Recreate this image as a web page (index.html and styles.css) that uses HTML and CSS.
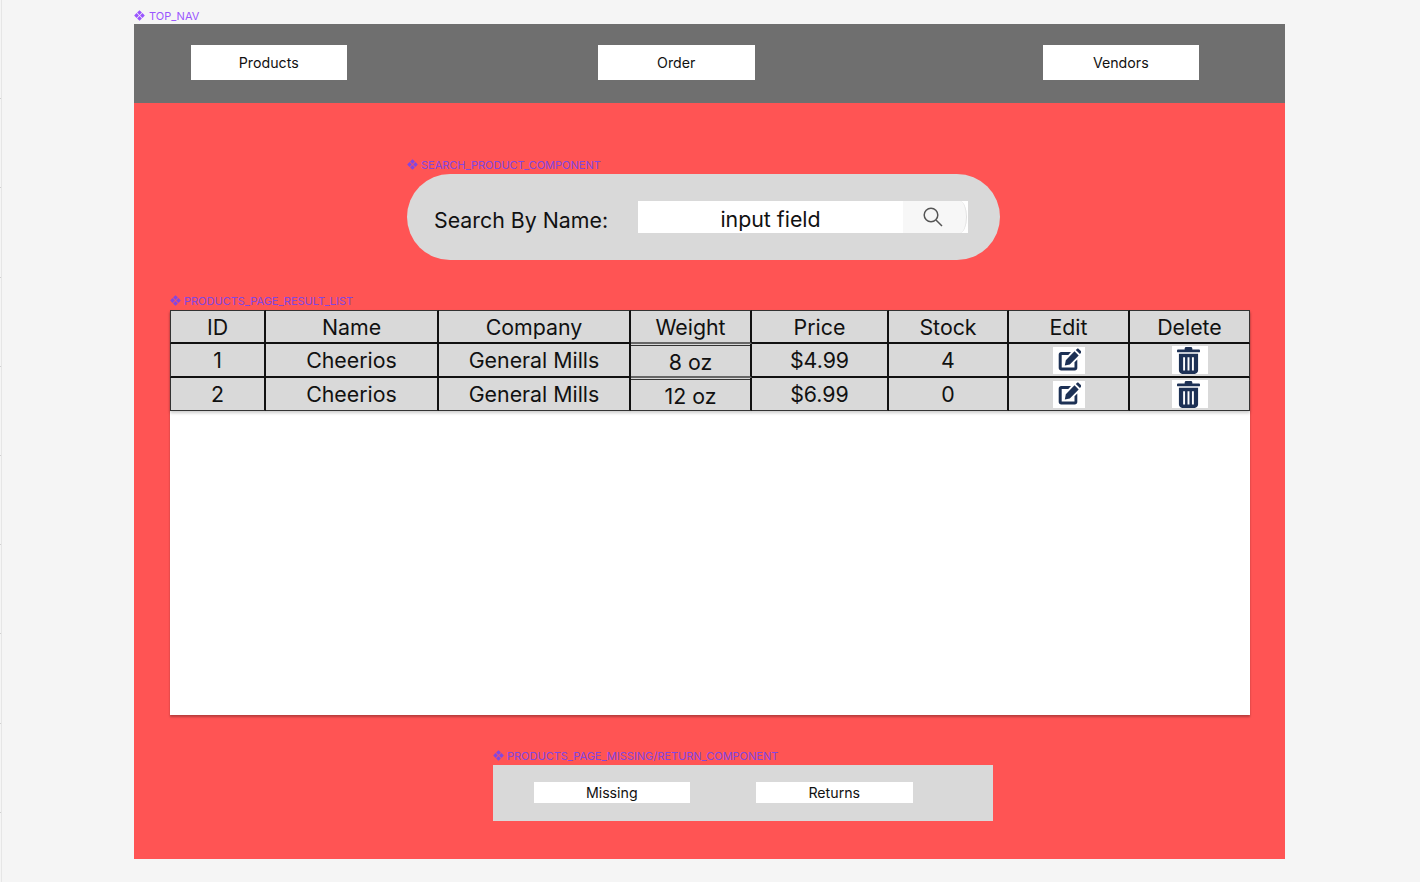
FILE: index.html
```html
<!DOCTYPE html>
<html lang="en">
<head>
  <meta charset="UTF-8">
  <title>Products Page</title>
  <link rel="stylesheet" href="styles.css">
</head>
<body>
  <svg width="0" height="0" class="defs">
    <symbol id="comp" viewBox="0 0 12 12">
      <path d="M6 .2 8.600 2.800 6 5.400 3.400 2.800ZM6 6.600 8.600 9.200 6 11.800 3.400 9.200ZM2.800 3.400 5.400 6 2.800 8.600.2 6ZM9.200 3.400 11.800 6 9.200 8.600 6.600 6Z"/>
    </symbol>
    <symbol id="edit" viewBox="0 0 24 24">
      <path d="M4.200 4H14L11.300 6.900H4.700V19.500H17.500V14.200L20.300 11.400V19.900C20.300 21.300 19.200 22.400 17.800 22.400H4.200C2.800 22.400 1.700 21.300 1.700 19.900V6.500C1.700 5.100 2.800 4 4.200 4Z"/>
      <path d="M17.500 3.300 21.700 7.500 12.800 16.400 7.800 17.600 8.800 12.200ZM18.800 2 19.900 .9C20.400 .4 21.200 .4 21.700 .9L23.900 3.100C24.400 3.600 24.400 4.400 23.900 4.900L22.900 6Z"/>
    </symbol>
    <symbol id="trash" viewBox="0 0 24 28">
      <path d="M8 1.500C8 .7 8.700 0 9.500 0H14.500C15.300 0 16 .7 16 1.500V2.500H23C23.600 2.500 24 2.900 24 3.500V4.500C24 5.100 23.600 5.500 23 5.500H1C.4 5.500 0 5.100 0 4.500V3.500C0 2.900.4 2.500 1 2.500H8Z"/>
      <path fill-rule="evenodd" d="M2 7H22V24.500C22 26.400 20.400 28 18.500 28H5.500C3.600 28 2 26.400 2 24.500ZM6.400 10.500V24.500H8.400V10.500ZM11 10.500V24.500H13V10.500ZM15.600 10.500V24.500H17.600V10.500Z"/>
    </symbol>
  </svg>

  <div class="ruler"></div>

  <div class="frame">
    <div class="tag tag-top">
      <svg class="tag-icon"><use href="#comp"/></svg>TOP_NAV
    </div>

    <nav class="top-nav">
      <a class="nav-btn">Products</a>
      <a class="nav-btn">Order</a>
      <a class="nav-btn">Vendors</a>
    </nav>

    <main class="page">
      <section class="search-wrap">
        <div class="tag tag-dark">
          <svg class="tag-icon"><use href="#comp"/></svg>SEARCH_PRODUCT_COMPONENT
        </div>
        <div class="search">
          <span class="search-label">Search By Name:</span>
          <div class="search-input">
            <span class="input-text">input field</span>
            <span class="search-btn">
              <svg width="22" height="22" viewBox="0 0 22 22" fill="none" stroke="#555" stroke-width="1.500">
                <circle cx="9" cy="9" r="6.800"/>
                <path d="M14 14 20 20"/>
              </svg>
            </span>
          </div>
        </div>
      </section>

      <section class="results">
        <div class="tag tag-dark">
          <svg class="tag-icon"><use href="#comp"/></svg>PRODUCTS_PAGE_RESULT_LIST
        </div>
        <div class="results-panel">
          <table class="results-table">
            <colgroup>
              <col class="col-id"><col class="col-name"><col class="col-company"><col class="col-weight">
              <col class="col-price"><col class="col-stock"><col class="col-edit"><col class="col-delete">
            </colgroup>
            <tr class="row-head">
              <td>ID</td><td>Name</td><td>Company</td><td class="head-weight">Weight</td><td>Price</td><td>Stock</td><td>Edit</td><td>Delete</td>
            </tr>
            <tr class="row-first">
              <td>1</td><td>Cheerios</td><td>General Mills</td><td class="cell-weight">8 oz</td><td>$4.99</td><td>4</td>
              <td><span class="icon-box edit-box"><svg width="24" height="24"><use href="#edit"/></svg></span></td>
              <td><span class="icon-box trash-box"><svg width="23" height="27"><use href="#trash"/></svg></span></td>
            </tr>
            <tr class="row-last">
              <td>2</td><td>Cheerios</td><td>General Mills</td><td class="cell-weight">12 oz</td><td>$6.99</td><td>0</td>
              <td><span class="icon-box edit-box"><svg width="24" height="24"><use href="#edit"/></svg></span></td>
              <td><span class="icon-box trash-box"><svg width="23" height="27"><use href="#trash"/></svg></span></td>
            </tr>
          </table>
        </div>
      </section>

      <section class="missing-wrap">
        <div class="tag tag-dark">
          <svg class="tag-icon"><use href="#comp"/></svg>PRODUCTS_PAGE_MISSING/RETURN_COMPONENT
        </div>
        <div class="missing">
          <a class="small-btn">Missing</a>
          <a class="small-btn">Returns</a>
        </div>
      </section>
    </main>
  </div>
</body>
</html>
```

FILE: styles.css
```css
html, body {
  margin: 0;
  height: 882px;
  overflow: hidden;
}
body {
  font-family: Inter, "Liberation Sans", sans-serif;
  background: #f5f5f5;
  color: #111;
}
.defs {
  position: absolute;
}
.ruler {
  position: absolute;
  left: 0;
  top: 0;
  width: 2px;
  height: 882px;
  background: repeating-linear-gradient(to bottom, transparent 0, transparent 88.2px, #d0d0d0 88.2px, #d0d0d0 89.2px) 0 10px;
  border-right: 1px solid #e6e6e6;
  box-sizing: border-box;
}

.frame {
  width: 1151px;
  margin-left: 134px;
}

/* purple component tags */
.tag {
  display: flex;
  align-items: flex-start;
  height: 15px;
  font-size: 11px;
  line-height: 12px;
  white-space: nowrap;
}
.tag-icon {
  flex: none;
  width: 11px;
  height: 11px;
  margin-right: 3px;
  fill: currentColor;
}
.tag-top {
  color: #9a55ff;
  height: 14px;
  padding-top: 10px;
}
.tag-top .tag-icon {
  margin-right: 4px;
}
.tag-dark {
  color: #8246e2;
}

.top-nav {
  display: grid;
  grid-template-columns: 407.5px 444.5px 156.5px;
  height: 79px;
  padding: 21px 0 0 56.5px;
  box-sizing: border-box;
  background: #6f6f6f;
}
.nav-btn {
  width: 156.5px;
  height: 35px;
  line-height: 35px;
  font-size: 14.2px;
  text-align: center;
  background: #fff;
}

.page {
  height: 756px;
  background: #ff5454;
  overflow: hidden;
}

.search-wrap {
  width: 593px;
  margin: 56px 0 0 273px;
}
.search {
  display: flex;
  align-items: center;
  height: 86px;
  padding-left: 27px;
  box-sizing: border-box;
  border-radius: 43px;
  background: #d9d9d9;
}
.search-label {
  width: 204px;
  font-size: 21.33px;
  padding-top: 5px;
}
.search-input {
  display: flex;
  width: 330px;
  height: 32px;
  background: #fff;
}
.input-text {
  width: 265px;
  font-size: 21.33px;
  line-height: 37px;
  text-align: center;
}
.search-btn {
  width: 64px;
  padding-left: 19px;
  box-sizing: border-box;
  background: #f7f7f7;
  border-right: 1px solid #e2e2e2;
  border-radius: 0 7px 7px 0 / 0 16px 16px 0;
}
.search-btn svg {
  display: block;
  margin-top: 5px;
}

.results {
  margin: 35px 35px 0 36px;
}
.results-panel {
  height: 405px;
  background: #fff;
  box-shadow: 0 2px 2px rgba(0,0,0,0.28);
}
.results-table {
  width: 1080px;
  table-layout: fixed;
  border-spacing: 0;
  background: #d9d9d9;
  box-shadow: 0 2px 3px rgba(0,0,0,0.2);
}
.results-table td {
  padding: 0;
  box-sizing: border-box;
  border-right: 2px solid #111;
  border-bottom: 2px solid #111;
  font-size: 21.33px;
  line-height: 30px;
  text-align: center;
  vertical-align: middle;
}
.results-table td:first-child {
  border-left: 1px solid #333;
}
.results-table td:last-child {
  border-right: 1px solid #333;
}
.row-head td {
  height: 34px;
  border-top: 1px solid #333;
}
.row-first td {
  height: 34px;
}
.row-last td {
  height: 33px;
  border-bottom: 1px solid #333;
}
.results-table .head-weight {
  border-bottom-color: #666;
}
.results-table .cell-weight {
  padding-top: 3px;
  line-height: 28px;
  box-shadow: inset 0 1px 0 #d9d9d9, inset 0 2px 0 #333;
}
.row-first .cell-weight {
  border-bottom-color: #666;
}
.col-id { width: 96px; }
.col-name { width: 173px; }
.col-company { width: 192px; }
.col-weight { width: 121px; }
.col-price { width: 137px; }
.col-stock { width: 120px; }
.col-edit { width: 121px; }
.col-delete { width: 120px; }

.icon-box {
  display: flex;
  align-items: center;
  justify-content: center;
  margin: 0 auto;
  background: #fff;
  fill: #1d3155;
}
.edit-box {
  width: 32px;
  height: 27px;
}
.trash-box {
  width: 36px;
  height: 28px;
}
.trash-box svg {
  margin-right: 3px;
}

.missing-wrap {
  width: 500px;
  margin: 35px 0 0 359px;
}
.missing {
  display: flex;
  gap: 66px;
  height: 56px;
  padding: 17px 0 0 40.5px;
  box-sizing: border-box;
  background: #d9d9d9;
}
.small-btn {
  width: 156.5px;
  height: 21px;
  line-height: 21px;
  font-size: 14.2px;
  text-align: center;
  background: #fff;
}
```
